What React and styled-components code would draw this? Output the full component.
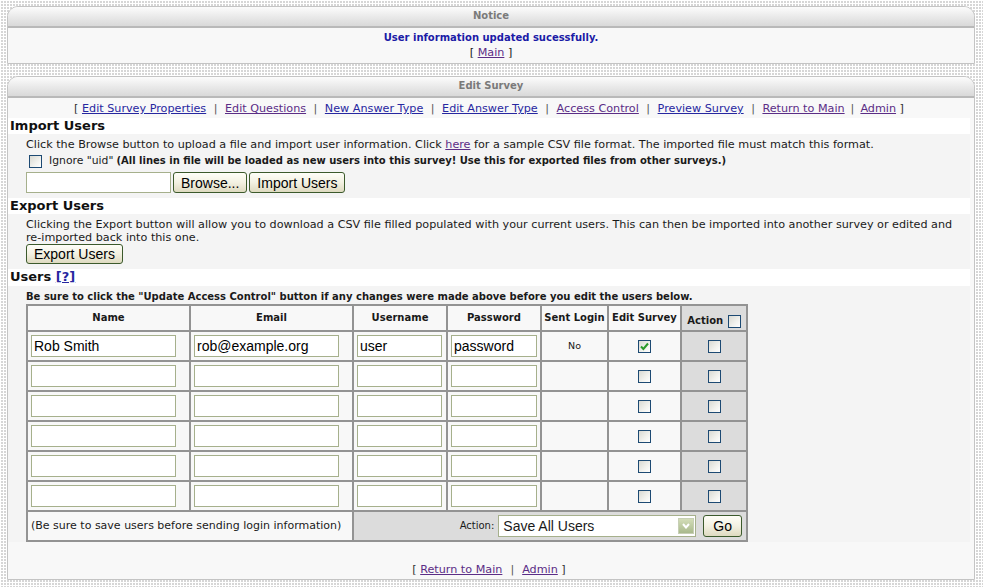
import React from 'react';
import styled, { createGlobalStyle } from 'styled-components';

const GlobalStyle = createGlobalStyle`
  html, body {
    margin: 0;
    padding: 0;
  }
  body {
    background-color: #ffffff;
    background-image:
      linear-gradient(90deg, #ffffff 1px, transparent 1px),
      linear-gradient(#ffffff 1px, #d6d6d6 1px);
    background-size: 3px 3px;
    font-family: "DejaVu Sans", Verdana, sans-serif;
    font-size: 11.2px;
    color: #1a1a1a;
  }
`;

const Page = styled.div`
  display: flex;
  flex-direction: column;
  gap: 12px;
  padding: 6px 8px 8px 7px;
`;

const Panel = styled.section`
  border: 1px solid #c4c4c4;
  border-radius: 11px 11px 0 0;
  background: #f8f8f8;
  overflow: hidden;
`;

const PanelHeader = styled.div`
  height: 19px;
  line-height: 18px;
  background: linear-gradient(#fcfcfc, #e8e8e8 55%, #d9d9d9);
  border-bottom: 2px solid #b9b9b9;
  text-align: center;
  font-weight: bold;
  font-size: 10px;
  color: #7a7a7a;
`;

const NoticeBody = styled.div`
  height: 35px;
  display: flex;
  flex-direction: column;
  align-items: center;
  padding-top: 2px;
  box-sizing: border-box;
  line-height: 15px;
`;

const Message = styled.div`
  font-weight: bold;
  font-size: 10px;
  color: #1b1ba6;
`;

const Link = styled.a`
  color: ${(p) => (p.$visited ? '#5b2d86' : '#2727a0')};
  text-decoration: underline;
  cursor: pointer;
`;

const LinkBar = styled.div`
  text-align: center;
  line-height: 15px;
  padding: 3px 0 2px;
  color: #333;
`;

const Sep = styled.span`
  padding: 0 ${(p) => p.$pad || 8}px;
  color: #555;
`;

const PanelBody = styled.div`
  padding: 0 4px 0 0;
`;

const SectionTitle = styled.h3`
  margin: 0;
  background: #ffffff;
  font-size: 13px;
  font-weight: bold;
  line-height: 16px;
  height: ${(p) => p.$h || 16}px;
  padding-left: 2px;
  color: #111;
`;

const SectionBody = styled.div`
  background: #f4f4f4;
  padding: ${(p) => p.$pad || '4px 8px 5px 18px'};
  line-height: 14px;
`;

const Paragraph = styled.div`
  line-height: ${(p) => p.$lh || 14}px;
`;

const NoWrap = styled.span`
  white-space: nowrap;
`;

const Line = styled.div`
  display: flex;
  align-items: center;
  gap: ${(p) => p.$gap || 0}px;
  margin-top: ${(p) => p.$mt || 0}px;
`;

const SmallText = styled.span`
  font-size: 10.8px;
  margin: 0 3px 0 7px;
`;

const Strong = styled.b`
  font-weight: bold;
  font-size: 10px;
`;

const Box = styled.span`
  display: inline-flex;
  align-items: center;
  justify-content: center;
  width: 13px;
  height: 13px;
  box-sizing: border-box;
  border: 1px solid #1d4a73;
  background: linear-gradient(135deg, #d9d9d2 0%, #f2f2ee 60%, #ffffff 100%);
  margin-left: ${(p) => p.$ml || 0}px;
  vertical-align: middle;
`;

const TextBox = styled.div`
  box-sizing: border-box;
  width: ${(p) => p.$w}px;
  height: ${(p) => p.$h || 22}px;
  border: 1px solid #a6b08c;
  background: #fff;
  font-family: "Liberation Sans", Arial, sans-serif;
  font-size: 14px;
  line-height: 20px;
  padding-left: 2px;
  color: #000;
  white-space: nowrap;
  overflow: hidden;
`;

const Button = styled.button`
  font-family: "Liberation Sans", Arial, sans-serif;
  font-size: 14px;
  height: ${(p) => p.$h || 21}px;
  padding: 0 ${(p) => p.$px || 7}px;
  border: 1px solid #3c5a2c;
  border-radius: 3px;
  background: linear-gradient(#fefef8, #f3f1e2 50%, #dedac0);
  color: #000;
  line-height: 18px;
  margin: 0;
`;

const UsersTable = styled.table`
  border-collapse: collapse;
  table-layout: fixed;
  width: 720px;
  margin-top: 0;
  border: 2px solid #939393;
  font-size: 10px;
`;

const Th = styled.th`
  border: 2px solid #939393;
  height: 22px;
  padding: 0;
  font-weight: bold;
  font-size: 10px;
  text-align: center;
  vertical-align: ${(p) => (p.$bottom ? 'bottom' : 'middle')};
  padding-bottom: ${(p) => (p.$bottom ? 2 : 0)}px;
  background: ${(p) => (p.$shade ? '#dcdcdc' : '#f8f8f8')};
  color: #1a1a1a;
`;

const Td = styled.td`
  border: 2px solid #939393;
  height: 28px;
  padding: 0 0 0 ${(p) => (p.$pl != null ? p.$pl : 3)}px;
  text-align: ${(p) => p.$align || 'left'};
  background: ${(p) => (p.$shade ? '#dcdcdc' : '#f8f8f8')};
  vertical-align: middle;
`;

const SentText = styled.span`
  font-size: 9.5px;
`;

const FooterCell = styled(Td)`
  padding: 0 4px 0 3px;
  font-size: 11px;
`;

const ActionBar = styled.div`
  display: flex;
  align-items: center;
  justify-content: flex-end;
  gap: 4px;
  font-size: 10px;
`;

const SelectBox = styled.div`
  box-sizing: border-box;
  width: 198px;
  height: 22px;
  border: 1px solid #a6b08c;
  background: #fff;
  display: flex;
  align-items: center;
  justify-content: space-between;
  padding: 0 1px 0 4px;
  font-family: "Liberation Sans", Arial, sans-serif;
  font-size: 14px;
  margin-right: 3px;
`;

const SelectArrow = styled.span`
  width: 16px;
  height: 16px;
  box-sizing: border-box;
  border: 1px solid #c7cfb5;
  background: linear-gradient(#d3ddb8, #a9b98c);
  display: inline-flex;
  align-items: center;
  justify-content: center;
`;

const Footer = styled.div`
  text-align: center;
  padding: 20px 0 2px;
  line-height: 15px;
  color: #333;
`;

const Check = () => (
  <svg width="9" height="9" viewBox="0 0 9 9">
    <path d="M1 4.5 L3.4 7 L8 1.5" fill="none" stroke="#2a9a2a" strokeWidth="2" />
  </svg>
);

const Chevron = () => (
  <svg width="8" height="6" viewBox="0 0 8 6">
    <path d="M1 1 L4 4.5 L7 1" fill="none" stroke="#ffffff" strokeWidth="2" />
  </svg>
);

const navLinks = [
  ['Edit Survey Properties', false],
  ['Edit Questions', true],
  ['New Answer Type', false],
  ['Edit Answer Type', false],
  ['Access Control', true],
  ['Preview Survey', false],
  ['Return to Main', true],
];

const users = [
  { name: 'Rob Smith', email: 'rob@example.org', username: 'user', password: 'password', sent: 'No', edit: true },
  {}, {}, {}, {}, {},
];

const App = () => {
  return (
    <>
      <GlobalStyle />
      <Page>
        <Panel>
          <PanelHeader>Notice</PanelHeader>
          <NoticeBody>
            <Message>User information updated sucessfully.</Message>
            <div>[ <Link $visited>Main</Link> ]</div>
          </NoticeBody>
        </Panel>

        <Panel>
          <PanelHeader>Edit Survey</PanelHeader>
          <PanelBody>
            <LinkBar>
              [{' '}
              {navLinks.map(([label, visited], i) => (
                <React.Fragment key={label}>
                  <Link $visited={visited}>{label}</Link>
                  <Sep $pad={i === navLinks.length - 1 ? 6 : 7.5}>|</Sep>
                </React.Fragment>
              ))}
              <Link $visited>Admin</Link> ]
            </LinkBar>

            <SectionTitle>Import Users</SectionTitle>
            <SectionBody>
              <Paragraph>
                Click the Browse button to upload a file and import user information. Click{' '}
                <Link $visited>here</Link> for a sample CSV file format. The imported file must match this format.
              </Paragraph>
              <Line $mt={2}>
                <Box $ml={3} />
                <SmallText>Ignore "uid"</SmallText>
                <Strong>(All lines in file will be loaded as new users into this survey! Use this for exported files from other surveys.)</Strong>
              </Line>
              <Line $gap={2} $mt={4}>
                <TextBox $w={145} $h={21} />
                <Button>Browse...</Button>
                <Button>Import Users</Button>
              </Line>
            </SectionBody>

            <SectionTitle>Export Users</SectionTitle>
            <SectionBody $pad="4px 8px 5px 18px">
              <Paragraph $lh={13}>
                Clicking the Export button will allow you to download a CSV file filled populated with your current users. This can then be imported into another survey or edited and{' '}
                <NoWrap>re-imported</NoWrap> back into this one.
              </Paragraph>
              <Line>
                <Button $h={20} $px={7}>Export Users</Button>
              </Line>
            </SectionBody>

            <SectionTitle $h={17}>
              Users <Link>[?]</Link>
            </SectionTitle>
            <SectionBody $pad="4px 8px 0 18px">
              <Strong>Be sure to click the "Update Access Control" button if any changes were made above before you edit the users below.</Strong>
              <UsersTable>
                <colgroup>
                  <col style={{ width: 163 }} />
                  <col style={{ width: 163 }} />
                  <col style={{ width: 94 }} />
                  <col style={{ width: 94 }} />
                  <col style={{ width: 67 }} />
                  <col style={{ width: 73 }} />
                  <col style={{ width: 66 }} />
                </colgroup>
                <thead>
                  <tr>
                    <Th>Name</Th>
                    <Th>Email</Th>
                    <Th>Username</Th>
                    <Th>Password</Th>
                    <Th>Sent Login</Th>
                    <Th>Edit Survey</Th>
                    <Th $shade $bottom>
                      Action <Box $ml={1} />
                    </Th>
                  </tr>
                </thead>
                <tbody>
                  {users.map((u, i) => (
                    <tr key={i}>
                      <Td><TextBox $w={145}>{u.name}</TextBox></Td>
                      <Td><TextBox $w={145}>{u.email}</TextBox></Td>
                      <Td><TextBox $w={85}>{u.username}</TextBox></Td>
                      <Td><TextBox $w={86}>{u.password}</TextBox></Td>
                      <Td $align="center" $pl={0}><SentText>{u.sent}</SentText></Td>
                      <Td $align="center" $pl={0}>
                        <Box>{u.edit && <Check />}</Box>
                      </Td>
                      <Td $align="center" $pl={0} $shade>
                        <Box />
                      </Td>
                    </tr>
                  ))}
                  <tr>
                    <FooterCell colSpan={2}>(Be sure to save users before sending login information)</FooterCell>
                    <FooterCell colSpan={5} $shade>
                      <ActionBar>
                        <span>Action:</span>
                        <SelectBox>
                          <span>Save All Users</span>
                          <SelectArrow><Chevron /></SelectArrow>
                        </SelectBox>
                        <Button $h={22} $px={9}>Go</Button>
                      </ActionBar>
                    </FooterCell>
                  </tr>
                </tbody>
              </UsersTable>
            </SectionBody>

            <Footer>
              [ <Link $visited>Return to Main</Link>
              <Sep>|</Sep>
              <Link $visited>Admin</Link> ]
            </Footer>
          </PanelBody>
        </Panel>
      </Page>
    </>
  );
};

export default App;
